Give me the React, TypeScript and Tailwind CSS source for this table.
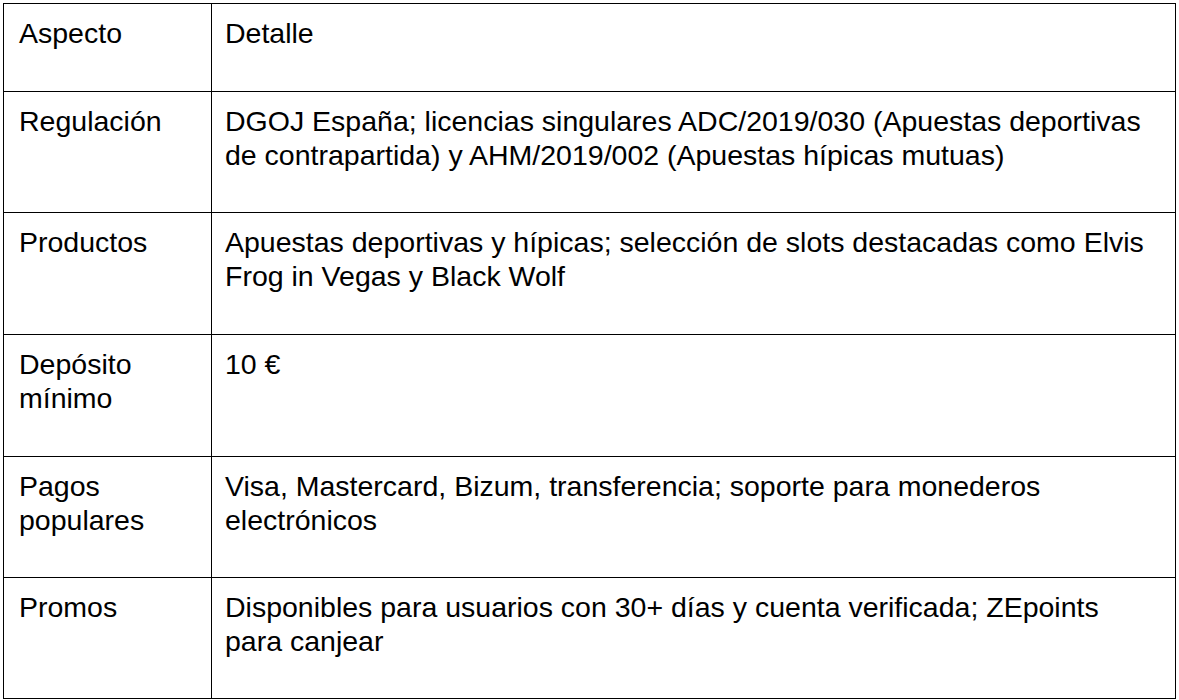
import React from "react";

const rows: [string, string, string][] = [
  ["Aspecto", "Detalle", "h-[88px]"],
  ["Regulación", "DGOJ España; licencias singulares ADC/2019/030 (Apuestas deportivas de contrapartida) y AHM/2019/002 (Apuestas hípicas mutuas)", "h-[121px]"],
  ["Productos", "Apuestas deportivas y hípicas; selección de slots destacadas como Elvis Frog in Vegas y Black Wolf", "h-[122px]"],
  ["Depósito mínimo", "10 €", "h-[122px]"],
  ["Pagos populares", "Visa, Mastercard, Bizum, transferencia; soporte para monederos electrónicos", "h-[121px]"],
  ["Promos", "Disponibles para usuarios con 30+ días y cuenta verificada; ZEpoints para canjear", "h-[121px]"],
];

export default function App() {
  return (
    <div className="w-[1179px] h-[700px] bg-white pl-[3px] pt-[3px]" style={{ fontFamily: '"Liberation Sans", Arial, sans-serif' }}>
      <table className="border-collapse table-fixed w-[1173px] text-[28.5px] leading-[33.5px] text-black">
        <colgroup>
          <col className="w-[208px]" />
          <col />
        </colgroup>
        <tbody>
          {rows.map(([a, b, h]) => (
            <tr key={a} className={h}>
              <td className="border border-black align-top pl-[15px] pr-[12px] pt-[13px]">{a}</td>
              <td className="border border-black align-top pl-[13px] pr-[12px] pt-[13px]">{b}</td>
            </tr>
          ))}
        </tbody>
      </table>
    </div>
  );
}
